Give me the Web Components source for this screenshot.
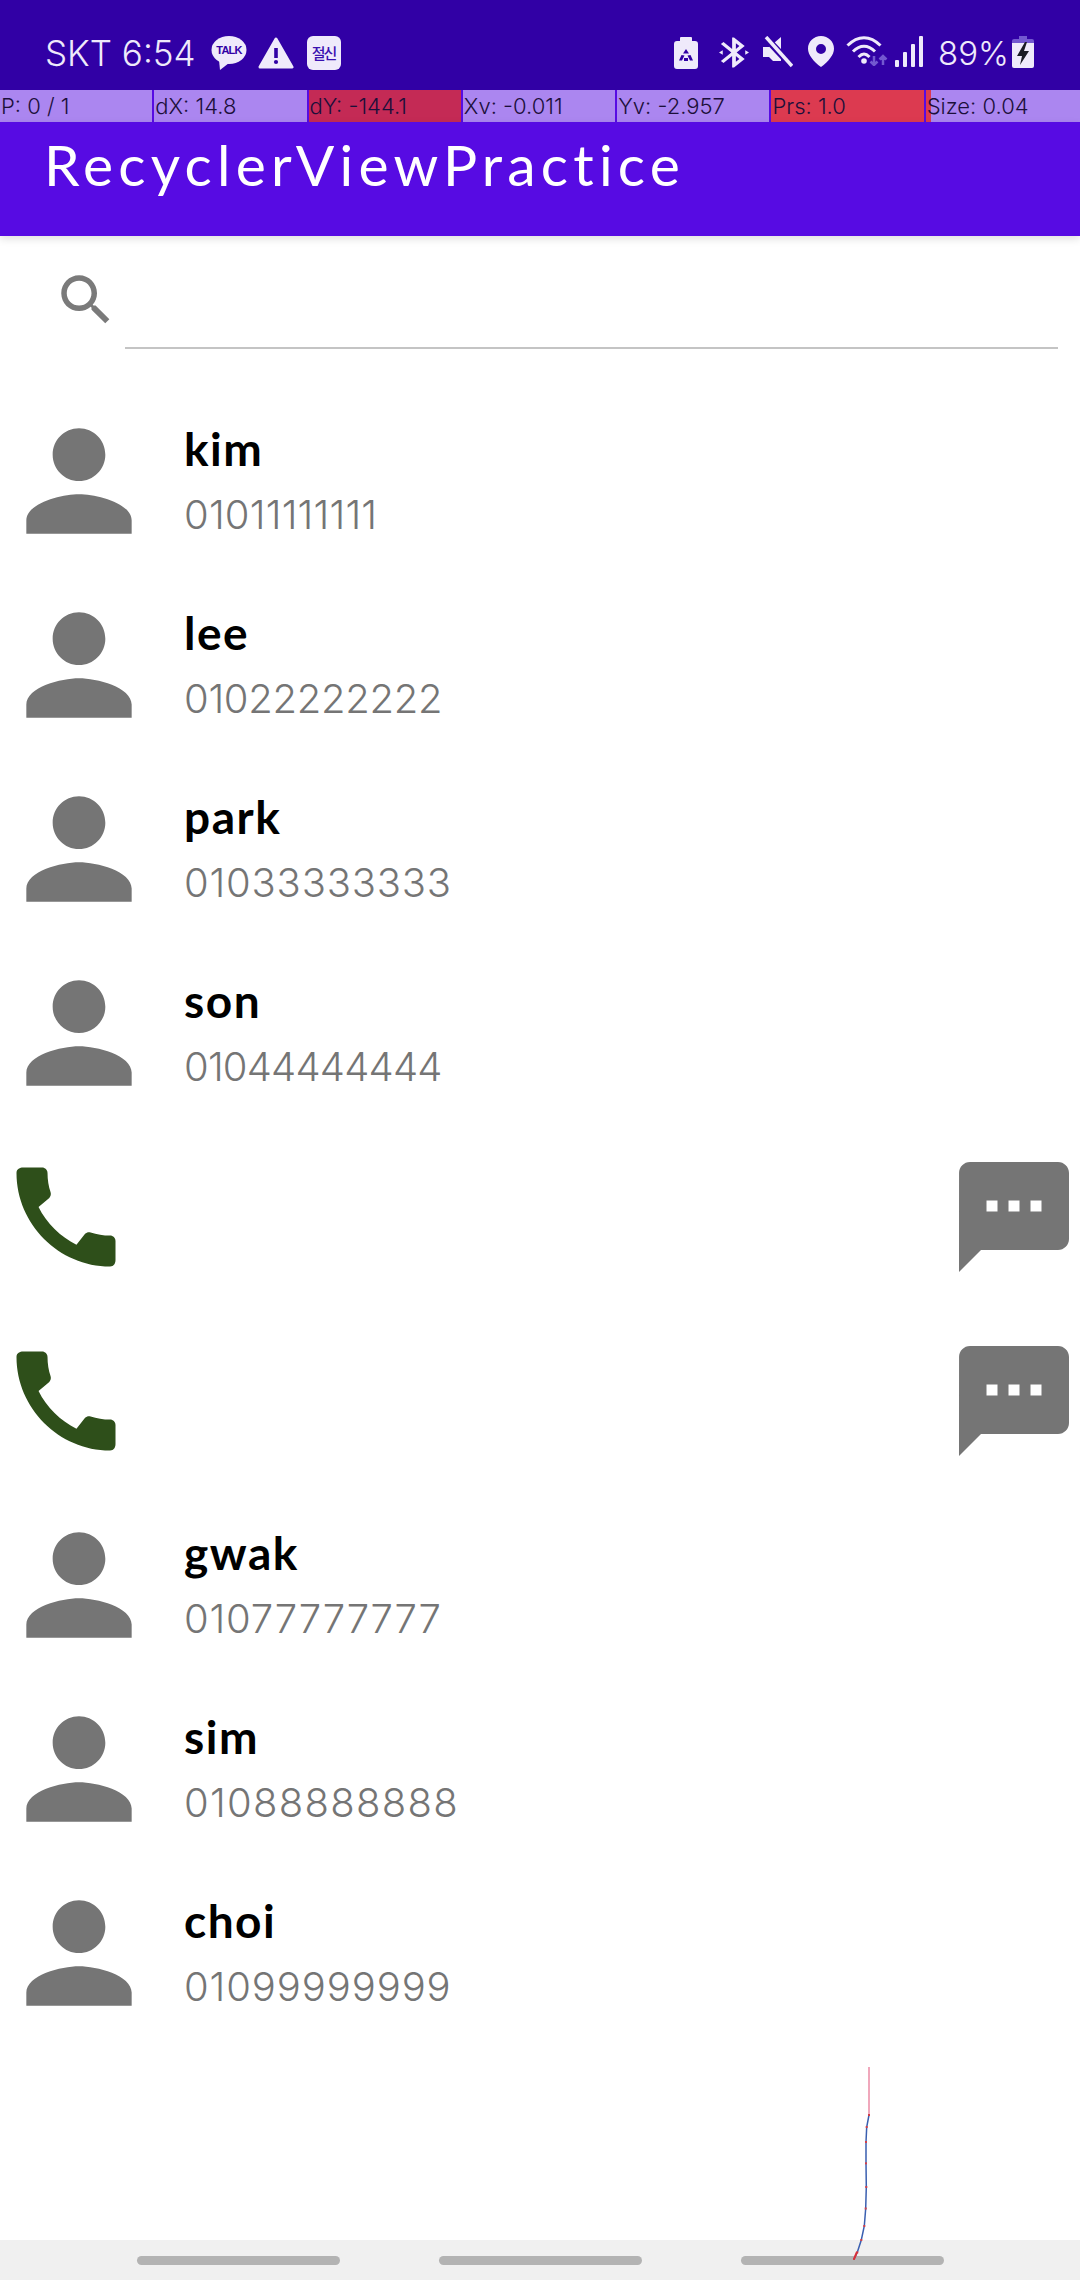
<!DOCTYPE html>
<html>
<head>
<meta charset="utf-8">
<title>RecyclerViewPractice</title>
<style>
  html, body { margin: 0; padding: 0; background: #fff; }
  body { width: 1080px; height: 2280px; overflow: hidden; position: relative; display: flex; flex-direction: column; font-family: "Lato", "Noto Sans", sans-serif; }
  contact-list { flex: 1; }
</style>
</head>
<body>
  <status-bar></status-bar>
  <pointer-overlay></pointer-overlay>
  <app-bar>RecyclerViewPractice</app-bar>
  <search-field></search-field>
  <contact-list>
    <contact-row name="kim" phone="01011111111" track="0.2"></contact-row>
    <contact-row name="lee" phone="01022222222" track="-0.3"></contact-row>
    <contact-row name="park" phone="01033333333" track="0.8"></contact-row>
    <contact-row name="son" phone="01044444444" track="-0.8"></contact-row>
    <swipe-row></swipe-row>
    <swipe-row></swipe-row>
    <contact-row name="gwak" phone="01077777777" track="0.8"></contact-row>
    <contact-row name="sim" phone="01088888888" track="1.3"></contact-row>
    <contact-row name="choi" phone="01099999999" track="0.9"></contact-row>
  </contact-list>
  <nav-bar></nav-bar>
  <pointer-trace></pointer-trace>

<script>
(function () {
  const TINT = '#efeafb';
  const BG = '#3100a5';

  class StatusBar extends HTMLElement {
    connectedCallback() {
      this.attachShadow({mode: 'open'}).innerHTML = `
        <style>
          :host { display: flex; height: 90px; box-sizing: border-box; padding: 36px 46px 0 45px; background: ${BG}; color: ${TINT}; font-family: "Inter", "Lato", sans-serif; font-weight: 300; font-size: 35px; }
          .left, .right { display: flex; align-items: flex-start; }
          .right { margin-left: auto; }
          .txt { line-height: 34px; white-space: pre; }
          svg { display: block; flex: none; }
          .kakao { margin-left: 15px; }
          .warn { margin-left: 11px; }
          .box { margin-left: 13px; width: 34px; height: 34px; border-radius: 6px; background: ${TINT}; color: #3a10b0; font: 500 15px/34px "Noto Sans CJK KR", sans-serif; text-align: center; letter-spacing: -2px; }
          .pct { margin: 0 3px 0 15px; font-size: 33px; }
        </style>
        <div class="left">
          <span class="txt">SKT 6:54</span>
          <svg class="kakao" width="36" height="34" viewBox="0 0 36 34">
            <ellipse cx="18" cy="14" rx="17.5" ry="14" fill="${TINT}"/>
            <path d="M8 24l1 10 9-7z" fill="${TINT}"/>
            <text x="18" y="18" text-anchor="middle" font-family="Liberation Sans, sans-serif" font-weight="700" font-size="11" letter-spacing="-0.8" fill="${BG}">TALK</text>
          </svg>
          <svg class="warn" width="36" height="34" viewBox="0 0 36 34">
            <path d="M18 3L34 31H2z" fill="${TINT}" stroke="${TINT}" stroke-width="3" stroke-linejoin="round"/>
            <rect x="16.2" y="12" width="3.6" height="10" fill="${BG}"/>
            <circle cx="18" cy="26" r="2.1" fill="${BG}"/>
          </svg>
          <span class="box">절신</span>
        </div>
        <div class="right">
          <svg width="24" height="32" viewBox="0 0 24 32" style="margin-top:1px">
            <path d="M7 0h10a1 1 0 0 1 1 1v3h3a3 3 0 0 1 3 3v22a3 3 0 0 1-3 3H3a3 3 0 0 1-3-3V7a3 3 0 0 1 3-3h3V1a1 1 0 0 1 1-1z" fill="${TINT}"/>
            <path d="M12 12l3 4.500h-6zM7.500 18l3 .5-2.500 5H5zM16.500 18l2.500 5.500h-3l-2.500-5zM10 21h4v3h-4z" fill="${BG}"/>
          </svg>
          <svg width="30" height="33" viewBox="4 1 16 22" preserveAspectRatio="none" style="margin-left:21px">
            <path d="M17.710 7.710L12 2h-1v7.590L6.410 5 5 6.410 10.590 12 5 17.590 6.410 19 11 14.410V22h1l5.710-5.710-4.300-4.290 4.300-4.290zM13 5.830l1.880 1.880L13 9.590V5.830zm1.880 10.460L13 18.170v-3.760l1.880 1.880z" fill="${TINT}"/>
            <path d="M4 12l2-1.500v3zM20 12l-2-1.500v3z" fill="${TINT}"/>
          </svg>
          <svg width="30" height="32" viewBox="0 0 30 32" style="margin-left:14px">
            <path d="M0 11h6l2-2 10 12v4l-8 0-4-4H0zM18 1v14l-7-8z" fill="${TINT}"/>
            <path d="M3 2l26 28" stroke="${BG}" stroke-width="7"/>
            <path d="M3 1l26 29" stroke="${TINT}" stroke-width="3.500"/>
          </svg>
          <svg width="26" height="31" viewBox="0 0 26 31" style="margin-left:15px">
            <path fill-rule="evenodd" d="M13 0c7.200 0 13 5.600 13 12.700 0 6.300-5.500 12.600-13 18.300C5.500 25.300 0 19 0 12.700 0 5.600 5.800 0 13 0zm0 8a5 5 0 1 0 0 10 5 5 0 0 0 0-10z" fill="${TINT}"/>
          </svg>
          <svg width="42" height="30" viewBox="0 0 42 30" style="margin-left:12px" fill="none" stroke="${TINT}" stroke-width="3">
            <path d="M1.500 9.500C12 -1 24 -1 34.500 9.500"/>
            <path d="M7 15.500c7-7 15-7 22 0"/>
            <path d="M12.500 21c4-4 7-4 11 0"/>
            <circle cx="18" cy="25" r="2.800" fill="${TINT}" stroke="none"/>
            <path d="M28 20v9m-3.500-3.500l3.500 3.500 3.500-3.500M37 29v-9m-3.500 3.500l3.500-3.500 3.500 3.500" stroke="#7358d0" stroke-width="2.500"/>
          </svg>
          <svg width="28" height="31" viewBox="0 0 28 31" style="margin-left:7px" fill="${TINT}">
            <rect x="0" y="24" width="4" height="7" rx="1"/>
            <rect x="8" y="16" width="4" height="15" rx="1"/>
            <rect x="16" y="8" width="4" height="23" rx="1"/>
            <rect x="24" y="0" width="4" height="31" rx="1"/>
          </svg>
          <span class="txt pct">89%</span>
          <svg width="22" height="32" viewBox="0 0 22 32">
            <path d="M7 0h8v3h5a2 2 0 0 1 2 2v4H0V5a2 2 0 0 1 2-2h5z" fill="#7358d0"/>
            <path d="M0 7h22v23a2 2 0 0 1-2 2H2a2 2 0 0 1-2-2z" fill="${TINT}"/>
            <path d="M13 6l-8 14h5l-2 9 9-14h-5l3-9z" fill="#1a1a24"/>
          </svg>
        </div>`;
    }
  }

  class PointerOverlay extends HTMLElement {
    connectedCallback() {
      const cells = [
        ['P: 0 / 1', ''],
        ['dX: 14.8', ''],
        ['dY: -144.1', 'bad'],
        ['Xv: -0.011', ''],
        ['Yv: -2.957', ''],
        ['Prs: 1.0', 'hot'],
        ['Size: 0.04', 'tail']
      ];
      this.attachShadow({mode: 'open'}).innerHTML = `
        <style>
          :host { display: grid; grid-template-columns: repeat(7, 1fr); height: 32px; background: #ab86f0; color: #1c0f3a; font-family: "Inter", "Lato", sans-serif; font-weight: 300; font-size: 22px; }
          div { box-sizing: border-box; line-height: 32px; padding-left: 1px; border-right: 2px solid #570be3; white-space: nowrap; overflow: hidden; }
          div:last-child { border-right: 0; }
          .bad { background: #c42a55; }
          .hot { background: #dc3a50; }
          .tail { background: linear-gradient(90deg, #dc3a50 5px, transparent 5px); }
        </style>
        ${cells.map(c => `<div class="${c[1]}">${c[0]}</div>`).join('')}`;
    }
  }

  class AppBar extends HTMLElement {
    connectedCallback() {
      this.attachShadow({mode: 'open'}).innerHTML = `
        <style>
          :host { display: block; height: 114px; box-sizing: border-box; padding: 0 0 0 44px; background: #570be3; color: #fff; font-family: "Lato", "Noto Sans", sans-serif; font-size: 57px; line-height: 84px; letter-spacing: 5.200px; box-shadow: 0 3px 8px rgba(0,0,0,.12); position: relative; z-index: 1; }
        </style>
        <slot></slot>`;
    }
  }

  class SearchField extends HTMLElement {
    connectedCallback() {
      this.attachShadow({mode: 'open'}).innerHTML = `
        <style>
          :host { display: flex; height: 153px; box-sizing: border-box; padding: 31px 22px 0 53px; }
          svg { display: block; flex: none; fill: #7a7a7a; }
          .line { flex: 1; height: 80px; margin-left: 6px; border-bottom: 2px solid #c4c4c4; box-sizing: content-box; }
        </style>
        <svg width="66" height="66" viewBox="0 0 24 24"><path d="M15.500 14h-.790l-.280-.270C15.410 12.590 16 11.110 16 9.500 16 5.910 13.090 3 9.500 3S3 5.910 3 9.500 5.910 16 9.500 16c1.610 0 3.090-.590 4.230-1.570l.270.280v.790l5 4.990L20.490 19l-4.990-5zm-6 0C7.010 14 5 11.990 5 9.500S7.010 5 9.500 5 14 7.010 14 9.500 11.990 14 9.500 14z"/></svg>
        <div class="line"></div>`;
    }
  }

  class ContactList extends HTMLElement {
    connectedCallback() {
      this.attachShadow({mode: 'open'}).innerHTML = `
        <style>:host { display: flex; flex-direction: column; }</style>
        <slot></slot>`;
    }
  }

  class ContactRow extends HTMLElement {
    connectedCallback() {
      this.attachShadow({mode: 'open'}).innerHTML = `
        <style>
          :host { display: flex; align-items: center; height: 184px; }
          svg { display: block; flex: none; fill: #757575; }
          .txt { margin-left: 26px; display: flex; flex-direction: column; }
          .name { font-family: "Lato", "Noto Sans", sans-serif; font-weight: 700; font-size: 46px; line-height: 60px; letter-spacing: 1.500px; color: #000; margin-top: 2px; }
          .phone { font-family: "Inter", "Lato", sans-serif; font-weight: 300; font-size: 40px; line-height: 60px; color: #757575; margin-top: 6px; letter-spacing: ${this.getAttribute('track') || 0}px; }
        </style>
        <svg width="158" height="158" viewBox="0 0 24 24"><path d="M12 12c2.210 0 4-1.790 4-4s-1.790-4-4-4-4 1.790-4 4 1.790 4 4 4zm0 2c-2.670 0-8 1.340-8 4v2h16v-2c0-2.660-5.330-4-8-4z"/></svg>
        <div class="txt">
          <span class="name">${this.getAttribute('name')}</span>
          <span class="phone">${this.getAttribute('phone')}</span>
        </div>`;
    }
  }

  class SwipeRow extends HTMLElement {
    connectedCallback() {
      this.attachShadow({mode: 'open'}).innerHTML = `
        <style>
          :host { display: flex; align-items: center; justify-content: space-between; height: 184px; }
          svg { display: block; flex: none; }
        </style>
        <svg width="132" height="132" viewBox="0 0 24 24" fill="#2e4f1a"><path d="M20.010 15.380c-1.230 0-2.420-.200-3.530-.560-.350-.120-.740-.030-1.010.240l-1.570 1.970c-2.830-1.350-5.480-3.900-6.890-6.830l1.950-1.660c.270-.280.350-.670.240-1.020-.370-1.110-.560-2.300-.560-3.530 0-.540-.450-.990-.990-.990H4.190C3.650 3 3 3.240 3 3.990 3 13.280 10.730 21 20.010 21c.710 0 .990-.630.990-1.180v-3.450c0-.540-.450-.990-.990-.990z"/></svg>
        <svg width="132" height="132" viewBox="0 0 24 24" fill="#757575"><path d="M20 2H4c-1.100 0-1.990.900-1.990 2L2 22l4-4h14c1.100 0 2-.900 2-2V4c0-1.100-.900-2-2-2zM9 11H7V9h2v2zm4 0h-2V9h2v2zm4 0h-2V9h2v2z"/></svg>`;
    }
  }

  class NavBar extends HTMLElement {
    connectedCallback() {
      this.attachShadow({mode: 'open'}).innerHTML = `
        <style>
          :host { display: flex; justify-content: center; gap: 99px; height: 40px; box-sizing: border-box; padding-top: 16px; background: #f0f0f0; }
          i { display: block; width: 203px; height: 9px; border-radius: 5px; background: #b3b3b3; }
        </style>
        <i></i><i></i><i></i>`;
    }
  }

  // free canvas: the finger trace is drawn over the page
  class PointerTrace extends HTMLElement {
    connectedCallback() {
      const pts = [[89,75],[86.7,87],[86,102],[86,123.300],[86.300,147],[85.700,168.500],[84.300,186],[81.300,200],[77.300,212.300],[74,219]];
      this.attachShadow({mode: 'open'}).innerHTML = `
        <style>
          :host { display: block; position: absolute; left: 780px; top: 2040px; width: 300px; height: 240px; pointer-events: none; }
          svg { display: block; }
        </style>
        <svg width="300" height="240" viewBox="0 0 300 240" fill="none">
          <path d="M89 27V75" stroke="#f0a8bc" stroke-width="2"/>
          <polyline points="${pts.join(' ')}" stroke="#3a5fb0" stroke-width="1.500"/>
          ${pts.map(p => `<rect x="${p[0]-1}" y="${p[1]-1}" width="2" height="2" fill="#d0404a"/>`).join('')}
          <path d="M77 212L74 219" stroke="#d8303a" stroke-width="2"/>
        </svg>`;
    }
  }

  customElements.define('status-bar', StatusBar);
  customElements.define('pointer-overlay', PointerOverlay);
  customElements.define('app-bar', AppBar);
  customElements.define('search-field', SearchField);
  customElements.define('contact-list', ContactList);
  customElements.define('contact-row', ContactRow);
  customElements.define('swipe-row', SwipeRow);
  customElements.define('nav-bar', NavBar);
  customElements.define('pointer-trace', PointerTrace);
})();
</script>
</body>
</html>
